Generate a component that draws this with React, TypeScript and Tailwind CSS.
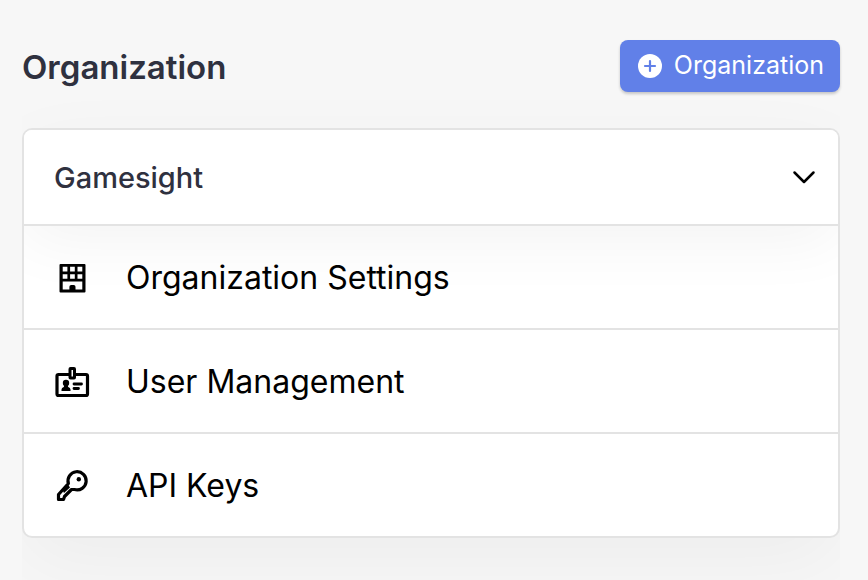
import { useState } from 'react'
import type { ReactNode } from 'react'

// ── Icons ─────────────────────────────────────────────────────────────────────

function PlusCircleIcon() {
  return (
    <svg viewBox="0 0 24 24" className="size-6 shrink-0" aria-hidden="true">
      <circle cx="12" cy="12" r="12" fill="#fff" />
      <path d="M12 7v10M7 12h10" stroke="#6180e8" strokeWidth="2.2" strokeLinecap="round" />
    </svg>
  )
}

function ChevronIcon() {
  return (
    <svg viewBox="0 0 24 24" className="size-6 shrink-0" fill="none" aria-hidden="true">
      <path
        d="M2.500 7.500 12 17l9.500-9.500"
        stroke="#000"
        strokeWidth="2.5"
        strokeLinecap="round"
        strokeLinejoin="round"
      />
    </svg>
  )
}

function BuildingIcon() {
  return (
    <svg viewBox="0 0 36 36" className="size-9 shrink-0" aria-hidden="true">
      <path
        fillRule="evenodd"
        d="M6.500 4h24a1 1 0 0 1 1 1v26.500a1 1 0 0 1-1 1h-24a1 1 0 0 1-1-1V5a1 1 0 0 1 1-1ZM8.700 6.800v4.600h4.700V6.800ZM16.100 6.800v4.600h4.700V6.800ZM23.500 6.800v4.600h4.800V6.800ZM8.700 14.200v4.600h4.700v-4.600ZM16.100 14.200v4.600h4.700v-4.600ZM23.500 14.200v4.600h4.800v-4.600ZM8.700 21.600v7.900h6.700v-2.700a1.800 1.800 0 0 1 1.800-1.800h2.500a1.800 1.800 0 0 1 1.800 1.800v2.700h6.800v-7.900Z"
      />
    </svg>
  )
}

function BadgeIcon() {
  return (
    <svg viewBox="0 0 36 36" className="size-9 shrink-0" fill="none" aria-hidden="true">
      <rect x="3" y="10.500" width="30.500" height="21" rx="1.500" stroke="#000" strokeWidth="3.200" />
      <rect x="16" y="4.500" width="4.500" height="9.500" rx="0.500" fill="#fff" stroke="#000" strokeWidth="3" />
      <circle cx="12" cy="19" r="3.200" fill="#000" />
      <path d="M7.500 27v-1.500q0-1.800 2.300-2.500l.7-2.500h3l.7 2.500q2.300.7 2.300 2.500V27Z" fill="#000" />
      <path d="M20 20h7.500M20 24.500h4.500" stroke="#000" strokeWidth="2.800" strokeLinecap="round" />
    </svg>
  )
}

function KeyIcon() {
  return (
    <svg viewBox="0 0 36 36" className="size-9 shrink-0" fill="none" aria-hidden="true">
      <path
        d="M14.400 15.500A9.100 9.100 0 1 1 20.500 21.500L17.500 21.500 12 27 10.500 28.500 9.500 31.500H4.500V26.500Z"
        stroke="#000"
        strokeWidth="3.200"
        strokeLinejoin="round"
      />
      <path d="M8.500 22 14 16.500 16 19.500 10 25Z" fill="#000" />
      <circle cx="24.800" cy="11.200" r="2.200" fill="#000" />
    </svg>
  )
}

// ── Menu ──────────────────────────────────────────────────────────────────────

interface MenuItem {
  label: string
  href: string
  icon: ReactNode
}

const items: MenuItem[] = [
  { label: 'Organization Settings', href: '#settings', icon: <BuildingIcon /> },
  { label: 'User Management', href: '#users', icon: <BadgeIcon /> },
  { label: 'API Keys', href: '#keys', icon: <KeyIcon /> },
]

export default function App() {
  const [open, setOpen] = useState(true)

  return (
    <main className="min-h-screen overflow-hidden bg-[#f7f7f7] px-[22px] pt-10 pb-10 font-['Inter',sans-serif] text-black">
      <header className="relative z-10 flex items-center justify-between">
        <h1 className="pt-0.5 text-[33px] leading-[50px] font-semibold text-[#2f313f]">Organization</h1>
        <button
          type="button"
          className="mr-1.5 flex h-[52px] items-center gap-3 rounded-lg bg-[#6180e8] pr-4 pl-[18px] text-[25px] text-white shadow-[0_2px_3px_rgba(0,0,0,0.2)]"
        >
          <PlusCircleIcon />
          Organization
        </button>
      </header>

      {/* The soft shadow is cut at the sides of the column */}
      <div className="-mt-9 -mb-10 mr-1.5 overflow-x-clip pt-[72px] pb-10">
        <section className="overflow-hidden rounded-[10px] border-2 border-[#e3e3e3] bg-white shadow-[0_24px_80px_rgba(0,0,0,0.045)]">
          {/* The header's shadow falls on the first row */}
          <button
            type="button"
            aria-expanded={open}
            onClick={() => setOpen(!open)}
            className="flex h-[94px] w-full items-center justify-between bg-white pr-[22px] pl-[30px] text-[29px] font-medium text-[#2f313f] shadow-[0_16px_64px_rgba(0,0,0,0.05)]"
          >
            <span className="pt-0.5">Gamesight</span>
            <ChevronIcon />
          </button>
          {open && (
            <nav>
              {items.map((item) => (
                <a
                  key={item.label}
                  href={item.href}
                  className="flex h-[104px] items-center gap-9 border-t-2 border-[#e3e3e3] pt-0.5 pl-[30px] text-[32px]"
                >
                  {item.icon}
                  {item.label}
                </a>
              ))}
            </nav>
          )}
        </section>
      </div>
    </main>
  )
}
